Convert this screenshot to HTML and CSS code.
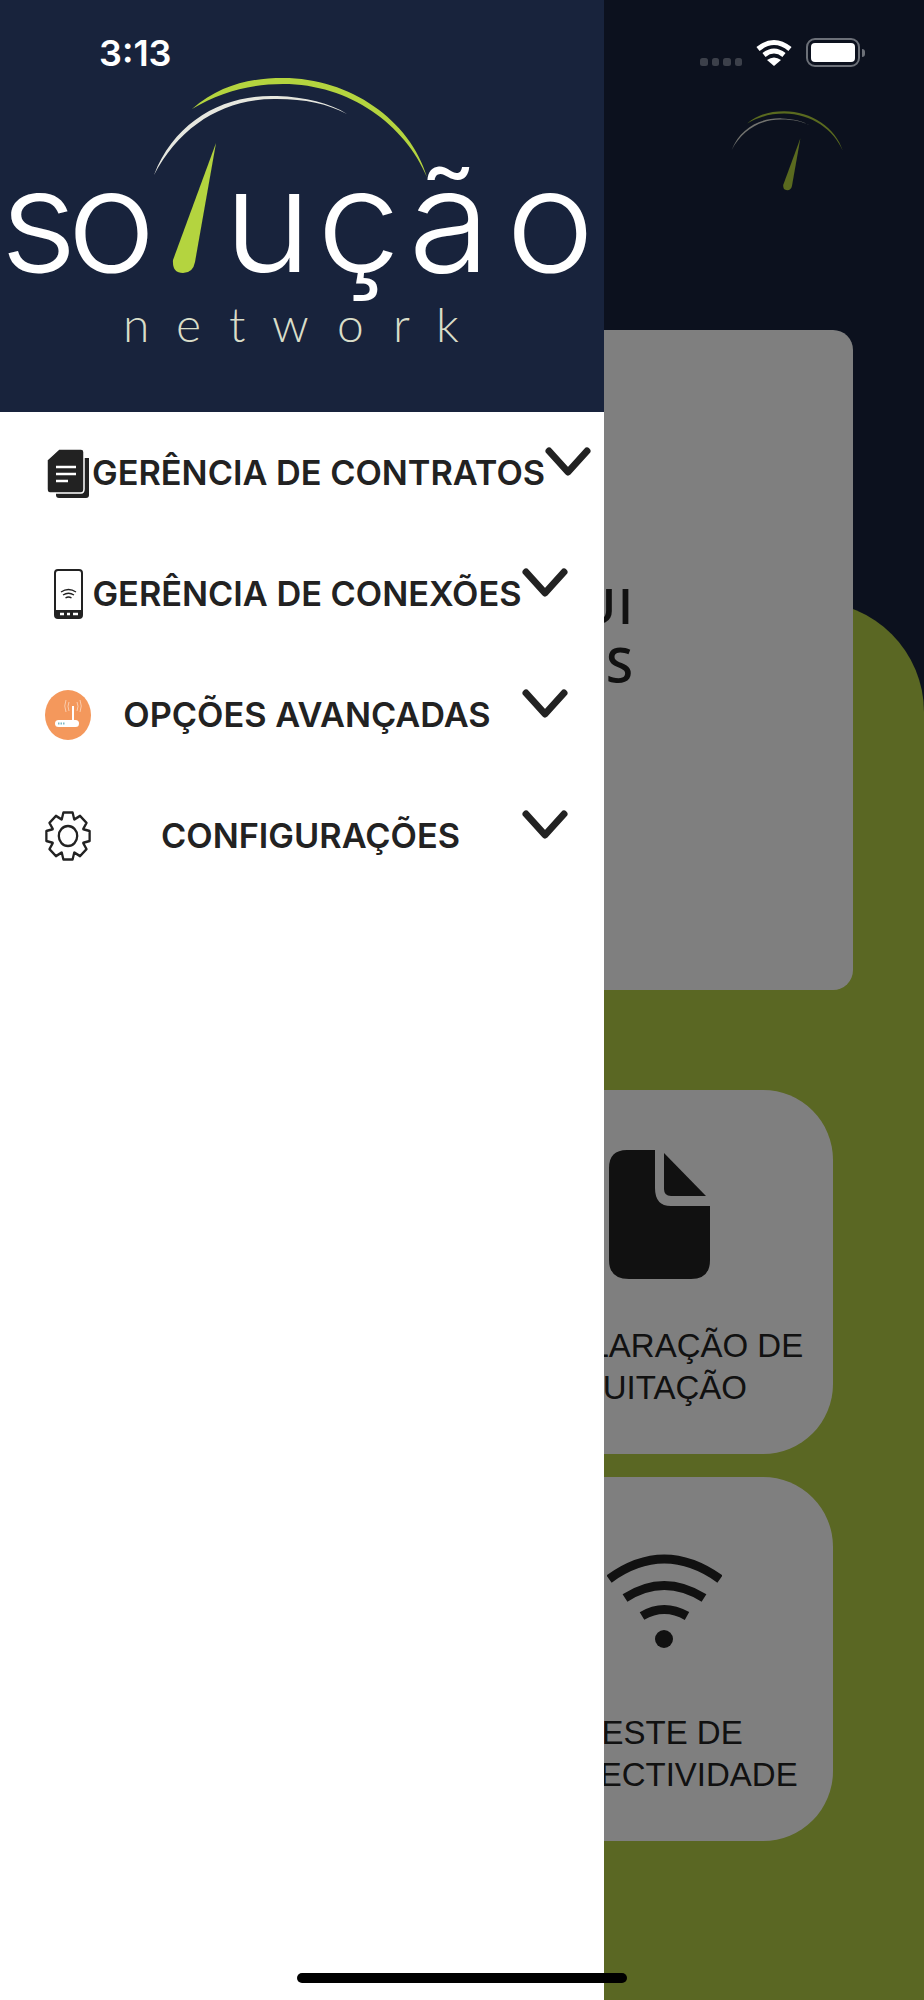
FILE: index.html
```html
<!DOCTYPE html>
<html lang="pt-BR">
<head>
    <meta charset="UTF-8">
    <meta name="viewport" content="width=device-width, initial-scale=1.0">
    <title>Solução Network</title>
    <link rel="stylesheet" href="styles.css">
</head>
<body>
    <div class="screen">
        <svg width="0" height="0" class="defs">
            <symbol id="arcs" viewBox="0 0 604 412" overflow="visible">
                <path class="arc-white" d="M154 175C175 120 225 94 277 96C305 97 330 103 347 114C328 104 305 99 277 99C225 98 180 125 154 175Z"/>
                <path class="arc-green" d="M192 109C220 85 250 78 283 78C350 78 410 120 427 177C405 125 350 84 283 84C250 84 220 92 192 109Z"/>
            </symbol>
            <symbol id="needle" viewBox="0 0 604 412" overflow="visible">
                <path class="arc-green" d="M216 143L195 262Q193 273 183 273Q172 273 173 260Z"/>
            </symbol>
        </svg>

        <!-- tela por baixo do menu -->
        <main class="home">
            <div class="green-panel"></div>
            <svg class="home-logo" viewBox="0 0 924 300">
                <use href="#arcs" width="604" height="412" transform="translate(669 80) scale(.407 .4)"/>
                <use href="#needle" width="604" height="412" transform="translate(714 81) scale(.4)"/>
            </svg>
            <section class="banner">
                <p>CLIQUE AQUI<br>VER FATURAS</p>
            </section>
            <section class="tile">
                <svg class="tile-icon" viewBox="0 0 115 129" width="115" height="129">
                    <g transform="translate(2 0)">
                        <path class="ink" d="M18 0H46V38Q46 56 62 56H101V110Q101 129 82 129H20Q0 129 0 110V18Q0 0 18 0Z"/>
                        <path class="ink" d="M55 3L97 46H62Q55 46 55 39Z"/>
                    </g>
                </svg>
                <p>DECLARAÇÃO DE<br>QUITAÇÃO</p>
            </section>
            <section class="tile">
                <svg class="tile-icon" viewBox="0 0 115 129" width="115" height="129">
                    <g transform="translate(0 18)">
                        <g class="wave">
                            <path d="M2 24Q57 -16 113 24"/>
                            <path d="M18 43Q57 18 97 43"/>
                            <path d="M35 61Q57 48 80 61"/>
                        </g>
                        <circle class="ink" cx="57" cy="84" r="9"/>
                    </g>
                </svg>
                <p>TESTE DE<br>CONECTIVIDADE</p>
            </section>
        </main>
        <div class="overlay"></div>

        <!-- menu lateral -->
        <aside class="drawer">
            <header class="drawer-head">
                <svg class="logo" viewBox="0 0 604 412" width="604" height="412">
                    <use href="#arcs" width="604" height="412"/>
                    <use href="#needle" width="604" height="412"/>
                    <text class="logo-word" y="272" x="0 64 213 302 389 482">soução</text>
                    <text class="logo-sub" y="342" x="123 176 229 272 337 393 436">network</text>
                </svg>
            </header>
            <nav class="menu">
                <div class="menu-row">
                    <svg class="menu-icon" viewBox="0 0 46 50">
                        <path class="dark" d="M11 10H44V47Q44 50 41 50H14Q11 50 11 47Z"/>
                        <path class="dark edge" d="M14 1H36Q39 1 39 4V41Q39 45 36 45H5Q2 45 2 41V12Z"/>
                        <path class="edge-white" d="M11 19H31M11 26H31M11 33H23"/>
                    </svg>
                    <span class="menu-label">GERÊNCIA DE CONTRATOS</span>
                    <svg class="chevron" viewBox="0 0 46 30"><path d="M4 4L23 25L42 4"/></svg>
                </div>
                <div class="menu-row">
                    <svg class="menu-icon" viewBox="0 0 46 50">
                        <rect class="phone" x="10" y="1" width="27" height="48" rx="3"/>
                        <rect class="dark" x="10" y="41" width="27" height="8"/>
                        <path class="edge-white" d="M15 45H19M22 45H25M28 45H33"/>
                        <path class="phone-wave" d="M16 23Q23.500 18 31 23M18 26Q23.500 22.500 29 26M20.500 29Q23.500 27 26.500 29"/>
                    </svg>
                    <span class="menu-label">GERÊNCIA DE CONEXÕES</span>
                    <svg class="chevron" viewBox="0 0 46 30"><path d="M4 4L23 25L42 4"/></svg>
                </div>
                <div class="menu-row">
                    <svg class="menu-icon" viewBox="0 0 46 50">
                        <ellipse class="router-bg" cx="23" cy="25" rx="23" ry="25"/>
                        <rect class="router" x="10" y="30" width="24" height="7" rx="3.500"/>
                        <path class="router-pole" d="M28 30L28 16"/>
                        <path class="router-sig" d="M24 12Q22 16 24 21M32 12Q34 16 32 21M21 10Q18.500 16 21 22M35 10Q37.500 16 35 22"/>
                        <path class="router-led" d="M13 33.500H20"/>
                    </svg>
                    <span class="menu-label">OPÇÕES AVANÇADAS</span>
                    <svg class="chevron" viewBox="0 0 46 30"><path d="M4 4L23 25L42 4"/></svg>
                </div>
                <div class="menu-row">
                    <svg class="menu-icon" viewBox="-25 -25 50 50" preserveAspectRatio="none">
                        <polygon class="gear" points="-6.74,-16.7 -5,-23.5 5,-23.5 6.74,-16.7 7.04,-16.57 13.08,-20.15 20.15,-13.08 16.57,-7.04 16.7,-6.74 23.5,-5 23.5,5 16.7,6.74 16.57,7.04 20.15,13.08 13.08,20.15 7.04,16.57 6.74,16.7 5,23.5 -5,23.5 -6.74,16.7 -7.04,16.57 -13.08,20.15 -20.15,13.08 -16.57,7.04 -16.7,6.74 -23.5,5 -23.5,-5 -16.7,-6.74 -16.57,-7.04 -20.15,-13.08 -13.08,-20.15 -7.04,-16.57"/>
                        <circle class="gear" r="10"/>
                    </svg>
                    <span class="menu-label menu-label-last">CONFIGURAÇÕES</span>
                    <svg class="chevron" viewBox="0 0 46 30"><path d="M4 4L23 25L42 4"/></svg>
                </div>
            </nav>
        </aside>

        <!-- barra de status -->
        <div class="status-time">3:13</div>
        <div class="status-icons">
            <div class="signal"><i></i><i></i><i></i><i></i></div>
            <svg class="status-wifi" viewBox="0 0 36 27" width="36" height="27">
                <path d="M2 10Q18 -3 34 10M8 16Q18 8 28 16"/>
                <path class="wifi-tip" d="M11 21L18 27L25 21Q18 16 11 21Z"/>
            </svg>
            <div class="battery"><div class="battery-fill"></div></div>
            <div class="battery-tip"></div>
        </div>
        <div class="home-bar"></div>
    </div>
</body>
</html>
```

FILE: styles.css
```css
* {
    box-sizing: border-box;
}

body {
    margin: 0;
    background: #18233c;
    font-family: "Inter", "Liberation Sans", sans-serif;
}

p {
    margin: 0;
}

.defs {
    position: absolute;
}

.arc-white {
    fill: #e6e7df;
}

.arc-green {
    fill: #b4d43f;
}

.screen {
    position: relative;
    width: 924px;
    height: 2000px;
    overflow: hidden;
}

/* tela de fundo */
.home {
    position: relative;
    height: 100%;
    padding: 330px 71px 0;
    background: #18233c;
    color: #222;
}

.green-panel {
    position: absolute;
    top: 602px;
    left: 0;
    right: 0;
    bottom: 0;
    background: #b4ce46;
    border-radius: 110px 110px 0 0;
}

.home-logo {
    position: absolute;
    top: 0;
    left: 0;
    width: 924px;
    height: 300px;
}

.banner {
    position: relative;
    display: flex;
    flex-direction: column;
    justify-content: center;
    height: 660px;
    background: #fff;
    border-radius: 20px;
    padding: 0 218px 50px 0;
    margin-bottom: 100px;
    text-align: right;
    font-family: "Open Sans", sans-serif;
    font-size: 49px;
    font-weight: 600;
    letter-spacing: 2px;
    line-height: 59px;
}

.tile {
    position: relative;
    display: flex;
    flex-direction: column;
    align-items: center;
    width: 338px;
    height: 364px;
    margin: 0 0 23px 424px;
    padding-top: 60px;
    background: #fff;
    border-radius: 70px;
    text-align: center;
    font-family: "Liberation Sans", sans-serif;
    font-size: 33px;
    line-height: 42px;
    white-space: nowrap;
}

.tile p {
    margin-right: 4px;
}

.tile-icon {
    flex: none;
    margin-bottom: 46px;
}

.ink {
    fill: #222;
}

.wave path {
    fill: none;
    stroke: #222;
    stroke-width: 9;
}

.overlay {
    position: absolute;
    inset: 0;
    background: rgba(0, 0, 0, 0.5);
}

/* menu */
.drawer {
    position: absolute;
    top: 0;
    left: 0;
    bottom: 0;
    width: 604px;
    background: #fff;
}

.drawer-head {
    height: 412px;
    background: #18233c;
    overflow: hidden;
}

.logo {
    display: block;
}

.logo-word {
    font-family: "Inter", sans-serif;
    font-size: 142px;
    font-weight: 300;
    fill: #fff;
    transform: scaleX(1.05);
}

.logo-sub {
    font-family: "Lato", sans-serif;
    font-size: 48px;
    font-weight: 300;
    fill: #d9ddc8;
}

.menu {
    display: flex;
    flex-direction: column;
    gap: 71px;
    padding: 36px 0 0 45px;
}

.menu-row {
    display: flex;
    align-items: center;
    height: 50px;
}

.menu-icon {
    flex: none;
    width: 46px;
    height: 50px;
}

.menu-label {
    flex: none;
    min-width: 431px;
    padding: 0 0 2px 1px;
    text-align: center;
    color: #222;
    font-size: 34.300px;
    font-weight: 600;
    white-space: nowrap;
}

.menu-label-last {
    padding-left: 8px;
}

.chevron {
    flex: none;
    align-self: flex-start;
    width: 46px;
    height: 30px;
    margin-top: -1px;
}

.chevron path {
    fill: none;
    stroke: #222;
    stroke-width: 7;
    stroke-linecap: round;
    stroke-linejoin: round;
}

.dark {
    fill: #222;
}

.edge {
    stroke: #fff;
    stroke-width: 1.5;
}

.edge-white {
    fill: none;
    stroke: #fff;
    stroke-width: 2.5;
}

.phone {
    fill: #fff;
    stroke: #222;
    stroke-width: 2;
}

.phone-wave {
    fill: none;
    stroke: #222;
    stroke-width: 1.300;
}

.router-bg {
    fill: #f4985c;
}

.router {
    fill: #fff;
}

.router-pole {
    stroke: #fff;
    stroke-width: 2;
}

.router-sig {
    fill: none;
    stroke: #fbd9c2;
    stroke-width: 0.800;
}

.router-led {
    stroke: #7db8c4;
    stroke-width: 2;
    stroke-dasharray: 1.500 1;
}

.gear {
    fill: none;
    stroke: #222;
    stroke-width: 2.500;
    stroke-linejoin: round;
}

/* barra de status */
.status-time {
    position: absolute;
    top: 32px;
    left: 99px;
    color: #fff;
    font-size: 36px;
    font-weight: 600;
    line-height: 42px;
}

.status-icons {
    position: absolute;
    top: 38px;
    left: 700px;
    display: flex;
    align-items: center;
    height: 29px;
}

.signal {
    display: flex;
    gap: 4px;
    margin: 19px 14px 0 0;
}

.signal i {
    width: 7.500px;
    height: 7.500px;
    border-radius: 2.500px;
    background: #3c404a;
}

.status-wifi {
    flex: none;
    margin-right: 14px;
}

.status-wifi path {
    fill: none;
    stroke: #fff;
    stroke-width: 5;
}

.status-wifi .wifi-tip {
    fill: #fff;
    stroke: none;
}

.battery {
    width: 54px;
    height: 29px;
    padding: 3px;
    border: 2px solid #6c7078;
    border-radius: 9px;
}

.battery-fill {
    height: 100%;
    background: #fff;
    border-radius: 4px;
}

.battery-tip {
    width: 3px;
    height: 8px;
    margin-left: 2px;
    background: #6c7078;
    border-radius: 0 3px 3px 0;
}

.home-bar {
    position: absolute;
    left: 297px;
    top: 1973px;
    width: 330px;
    height: 10px;
    background: #000;
    border-radius: 5px;
}
```
